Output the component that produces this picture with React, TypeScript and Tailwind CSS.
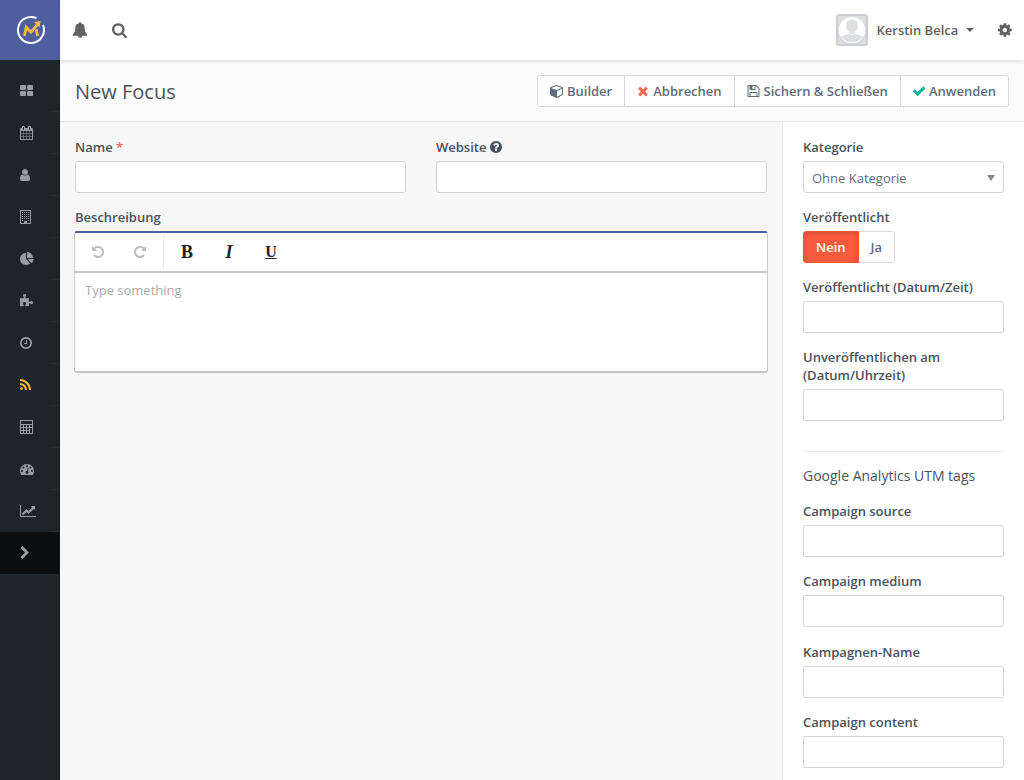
import clsx from "clsx";
import { useState, type ReactNode } from "react";

type Glyph = { box: string; d: string };

const ICONS = {
  grid: {
    box: "64 0 1664 1792",
    d: "M832 1024v384q0 52-38 90t-90 38h-512q-52 0-90-38t-38-90v-384q0-52 38-90t90-38h512q52 0 90 38t38 90zm0-768v384q0 52-38 90t-90 38h-512q-52 0-90-38t-38-90v-384q0-52 38-90t90-38h512q52 0 90 38t38 90zm896 768v384q0 52-38 90t-90 38h-512q-52 0-90-38t-38-90v-384q0-52 38-90t90-38h512q52 0 90 38t38 90zm0-768v384q0 52-38 90t-90 38h-512q-52 0-90-38t-38-90v-384q0-52 38-90t90-38h512q52 0 90 38t38 90z",
  },
  calendar: {
    box: "64 0 1664 1792",
    d: "M192 1664h288v-288h-288v288zm352 0h320v-288h-320v288zm-352-352h288v-320h-288v320zm352 0h320v-320h-320v320zm-352-384h288v-288h-288v288zm736 736h320v-288h-320v288zm-384-736h320v-288h-320v288zm768 736h288v-288h-288v288zm-384-352h320v-320h-320v320zm-352-864v-288q0-13-9.500-22.500t-22.500-9.500h-64q-13 0-22.500 9.500t-9.500 22.500v288q0 13 9.500 22.500t22.500 9.500h64q13 0 22.500-9.500t9.500-22.500zm736 864h288v-320h-288v320zm-384-384h320v-288h-320v288zm384 0h288v-288h-288v288zm32-480v-288q0-13-9.500-22.500t-22.500-9.500h-64q-13 0-22.500 9.500t-9.500 22.500v288q0 13 9.500 22.500t22.500 9.500h64q13 0 22.500-9.500t9.500-22.500zm384-64v1280q0 52-38 90t-90 38h-1408q-52 0-90-38t-38-90v-1280q0-52 38-90t90-38h128v-96q0-66 47-113t113-47h64q66 0 113 47t47 113v96h384v-96q0-66 47-113t113-47h64q66 0 113 47t47 113v96h128q52 0 90 38t38 90z",
  },
  user: {
    box: "256 0 1280 1792",
    d: "M1536 1399q0 109-62.500 187t-150.500 78h-854q-88 0-150.500-78t-62.500-187q0-85 8.500-160.500t31.500-152 58.500-131 94-89 134.500-34.500q131 128 313 128t313-128q76 0 134.500 34.500t94 89 58.500 131 31.500 152 8.500 160.500zm-256-887q0 159-112.500 271.500t-271.500 112.500-271.500-112.500-112.500-271.500 112.500-271.500 271.500-112.500 271.500 112.500 112.500 271.500z",
  },
  building: {
    box: "0 0 11 14",
    d: "M0 0h11v14h-11zM1 1v12h3v-2h3v2h3v-12zM2 2h1v1h-1zM4 2h1v1h-1zM6 2h1v1h-1zM8 2h1v1h-1zM2 4h1v1h-1zM4 4h1v1h-1zM6 4h1v1h-1zM8 4h1v1h-1zM2 6h1v1h-1zM4 6h1v1h-1zM6 6h1v1h-1zM8 6h1v1h-1zM2 8h1v1h-1zM4 8h1v1h-1zM6 8h1v1h-1zM8 8h1v1h-1zM2 10h1v1h-1zM8 10h1v1h-1z",
  },
  pie: {
    box: "0 0 1792 1792",
    d: "M768 890l546 546q-106 108-247.500 168t-298.500 60q-209 0-385.500-103t-279.500-279.500-103-385.500 103-385.500 279.500-279.500 385.500-103v762zm187 6h773q0 157-60 298.500t-168 247.500zm709-128h-768v-768q209 0 385.500 103t279.500 279.500 103 385.500z",
  },
  puzzle: {
    box: "64 0 1664 1792",
    d: "M1728 1098q0 81-44.500 135t-123.500 54q-41 0-77.500-17.500t-59-38-56.500-38-71-17.500q-110 0-110 124 0 39 16 115t15 115v5q-22 0-33 1-34 3-97.500 11.500t-115.500 13.500-98 5q-61 0-103-26.500t-42-83.500q0-37 17.500-71t38-56.500 38-59 17.500-77.500q0-79-54-123.500t-135-44.500q-84 0-143 45.500t-59 127.500q0 43 15 83t33.500 64.500 33.500 53 15 50.500q0 45-46 89-37 35-117 35-95 0-245-24-9-2-27.500-4t-27.500-4l-13-2q-1 0-3-1-2 0-2-1v-1024q2 1 17.500 3.500t34 5 21.500 3.500q150 24 245 24 80 0 117-35 46-44 46-89 0-22-15-50.500t-33.500-53-33.500-64.500-15-83q0-82 59-127.500t144-45.500q80 0 134 44.500t54 123.500q0 41-17.500 77.500t-38 59-38 56.500-17.500 71q0 57 42 83.500t103 26.500q64 0 180-15t163-17v2q-1 2-3.500 17.500t-5 34-3.500 21.500q-24 150-24 245 0 80 35 117 44 46 89 46 22 0 50.500-15t53-33.500 64.500-33.500 83-15q82 0 127.500 59t45.500 143z",
  },
  clock: {
    box: "128 0 1536 1792",
    d: "M1024 544v448q0 14-9 23t-23 9h-320q-14 0-23-9t-9-23v-64q0-14 9-23t23-9h224v-352q0-14 9-23t23-9h64q14 0 23 9t9 23zm416 352q0-148-73-273t-198-198-273-73-273 73-198 198-73 273 73 273 198 198 273 73 273-73 198-198 73-273zm224 0q0 209-103 385.500t-279.500 279.500-385.500 103-385.500-103-279.500-279.500-103-385.500 103-385.500 279.500-279.500 385.500-103 385.500 103 279.500 279.500 103 385.500z",
  },
  feed: {
    box: "192 0 1408 1792",
    d: "M576 1344q0 80-56 136t-136 56-136-56-56-136 56-136 136-56 136 56 56 136zm512 123q2 28-17 48-18 21-47 21h-135q-25 0-43-16.500t-20-41.500q-22-229-184.500-391.500t-391.500-184.500q-25-2-41.500-20t-16.500-43v-135q0-29 21-47 17-17 43-17h5q160 13 306 80.500t259 181.500q114 113 181.500 259t80.500 306zm512 2q2 27-18 47-18 20-46 20h-143q-26 0-44.500-17.500t-19.500-42.500q-12-215-101-408.500t-231.500-336-336-231.500-408.500-102q-25-1-42.500-19.500t-17.500-43.500v-143q0-28 20-46 18-18 44-18h3q262 13 501.500 120t425.500 294q187 186 294 425.500t120 501.500z",
  },
  calculator: {
    box: "0 0 13 14",
    d: "M0 0h13v14h-13zM1 1v3h11v-3zM1 5v2h2v-2zM4 5v2h2v-2zM7 5v2h2v-2zM10 5v2h2v-2zM1 8v2h2v-2zM4 8v2h2v-2zM7 8v2h2v-2zM1 11v2h2v-2zM4 11v2h2v-2zM7 11v2h2v-2zM10 8v5h2v-5z",
  },
  gauge: {
    box: "0 0 1792 1792",
    d: "M384 1152q0-53-37.500-90.500t-90.500-37.500-90.500 37.500-37.500 90.500 37.500 90.500 90.500 37.500 90.500-37.500 37.500-90.500zm192-448q0-53-37.500-90.500t-90.500-37.500-90.500 37.500-37.500 90.500 37.500 90.500 90.500 37.500 90.500-37.500 37.500-90.500zm428 481l101-382q6-26-7.500-48.500t-38.500-29.500-48 6.500-30 39.500l-101 382q-60 5-107 43.500t-63 98.500q-20 77 20 146t117 89 146-20 89-117q16-60-6-117t-72-91zm660-33q0-53-37.500-90.500t-90.500-37.500-90.500 37.500-37.500 90.500 37.500 90.500 90.500 37.500 90.500-37.500 37.500-90.500zm-640-640q0-53-37.500-90.500t-90.500-37.500-90.500 37.500-37.500 90.500 37.500 90.500 90.500 37.500 90.500-37.500 37.500-90.500zm448 192q0-53-37.500-90.500t-90.500-37.500-90.500 37.500-37.500 90.500 37.500 90.500 90.500 37.500 90.500-37.500 37.500-90.500zm320 448q0 261-141 483-19 29-54 29h-1402q-35 0-54-29-141-221-141-483 0-182 71-348t191-286 286-191 348-71 348 71 286 191 191 286 71 348z",
  },
  chart: {
    box: "0 0 2048 1792",
    d: "M2048 1536v128h-2048v-1536h128v1408h1920zm-128-1248v435q0 21-19.500 29.500t-35.500-7.500l-121-121-633 633q-10 10-23 10t-23-10l-233-233-416 416-192-192 585-585q10-10 23-10t23 10l233 233 464-464-121-121q-16-16-7.500-35.500t29.500-19.500h435q14 0 23 9t9 23z",
  },
  chevron: {
    box: "256 0 1280 1792",
    d: "M1363 877l-742 742q-19 19-45 19t-45-19l-166-166q-19-19-19-45t19-45l531-531-531-531q-19-19-19-45t19-45l166-166q19-19 45-19t45 19l742 742q19 19 19 45t-19 45z",
  },
  bell: {
    box: "0 0 1792 1792",
    d: "M912 1696q0-16-16-16-59 0-101.500-42.500t-42.500-101.500q0-16-16-16t-16 16q0 73 51.500 124.500t124.500 51.500q16 0 16-16zm816-288q0 52-38 90t-90 38h-448q0 106-75 181t-181 75-181-75-75-181h-448q-52 0-90-38t-38-90q50-42 91-88t85-119.500 74.500-158.500 50-206 19.500-260q0-152 117-282.500t307-158.500q-8-19-8-39 0-40 28-68t68-28 68 28 28 68q0 20-8 39 190 28 307 158.500t117 282.500q0 139 19.500 260t50 206 74.500 158.500 85 119.500 91 88z",
  },
  search: {
    box: "64 0 1664 1792",
    d: "M1216 832q0-185-131.500-316.500t-316.500-131.500-316.500 131.500-131.500 316.500 131.500 316.500 316.500 131.500 316.500-131.500 131.500-316.500zm512 832q0 52-38 90t-90 38q-54 0-90-38l-343-342q-179 124-399 124-143 0-273.500-55.500t-225-150-150-225-55.500-273.500 55.500-273.500 150-225 225-150 273.500-55.500 273.500 55.500 225 150 150 225 55.500 273.500q0 220-124 399l343 343q37 37 37 90z",
  },
  cog: {
    box: "128 0 1536 1792",
    d: "M1152 896q0-106-75-181t-181-75-181 75-75 181 75 181 181 75 181-75 75-181zm512-109v222q0 12-8 23t-20 13l-185 28q-19 54-39 91 35 50 107 138 10 12 10 25t-9 23q-27 37-99 108t-94 71q-12 0-26-9l-138-108q-44 23-91 38-16 136-29 186-7 28-36 28h-222q-14 0-24.500-8.500t-11.500-21.500l-28-184q-49-16-90-37l-141 107q-10 9-25 9-14 0-25-11-126-114-165-168-7-10-7-23 0-12 8-23 15-21 51-66.500t54-70.500q-27-50-41-99l-183-27q-13-2-21-12.500t-8-23.500v-222q0-12 8-23t19-13l186-28q14-46 39-92-40-57-107-138-10-12-10-24 0-10 9-23 26-36 98.500-107.500t94.500-71.500q13 0 26 10l138 107q44-23 91-38 16-136 29-186 7-28 36-28h222q14 0 24.500 8.500t11.500 21.500l28 184q49 16 90 37l142-107q9-9 24-9 13 0 25 10 129 119 165 170 7 8 7 22 0 12-8 23-15 21-51 66.500t-54 70.500q26 50 41 98l183 28q13 2 21 12.500t8 23.500z",
  },
  cube: {
    box: "0 0 1664 1792",
    d: "M896 1629l640-349v-636l-640 233v752zm-64-865l698-254-698-254-698 254zm832-252v768q0 35-18 65t-49 47l-704 384q-28 16-61 16t-61-16l-704-384q-31-17-49-47t-18-65v-768q0-40 23-73t61-47l704-256q22-8 44-8t44 8l704 256q38 14 61 47t23 73z",
  },
  times: {
    box: "128 0 1536 1792",
    d: "M1490 1322q0 40-28 68l-136 136q-28 28-68 28t-68-28l-294-294-294 294q-28 28-68 28t-68-28l-136-136q-28-28-28-68t28-68l294-294-294-294q-28-28-28-68t28-68l136-136q28-28 68-28t68 28l294 294 294-294q28-28 68-28t68 28l136 136q28 28 28 68t-28 68l-294 294 294 294q28 28 28 68z",
  },
  floppy: {
    box: "64 0 1664 1792",
    d: "M512 1536h768v-384h-768v384zm896 0h128v-896q0-14-10-38.500t-20-34.500l-281-281q-10-10-34-20t-39-10v416q0 40-28 68t-68 28h-576q-40 0-68-28t-28-68v-416h-128v1280h128v-416q0-40 28-68t68-28h832q40 0 68 28t28 68v416zm-384-928v-320q0-13-9.500-22.500t-22.500-9.500h-192q-13 0-22.500 9.500t-9.500 22.500v320q0 13 9.500 22.500t22.500 9.500h192q13 0 22.500-9.500t9.500-22.500zm640 32v928q0 40-28 68t-68 28h-1344q-40 0-68-28t-28-68v-1344q0-40 28-68t68-28h928q40 0 88 20t76 48l280 280q28 28 48 76t20 88z",
  },
  check: {
    box: "120 0 1552 1792",
    d: "M1671 566q0 40-28 68l-724 724-136 136q-28 28-68 28t-68-28l-136-136-362-362q-28-28-28-68t28-68l136-136q28-28 68-28t68 28l294 295 656-657q28-28 68-28t68 28l136 136q28 28 28 68z",
  },
  undo: {
    box: "128 0 1536 1792",
    d: "M1664 896q0 156-61 298t-164 245-245 164-298 61q-172 0-327-72.500t-264-204.500q-7-10-6.500-22.500t8.500-20.500l137-138q10-9 25-9 16 2 23 12 73 95 179 147t225 52q104 0 198.500-40.500t163.500-109.500 109.500-163.500 40.500-198.500-40.500-198.500-109.500-163.500-163.500-109.500-198.500-40.500q-98 0-188 35.500t-160 101.500l137 138q31 30 14 69-17 40-59 40h-448q-26 0-45-19t-19-45v-448q0-42 40-59 39-17 69 14l130 129q107-101 244.500-156.500t284.500-55.500q156 0 298 61t245 164 164 245 61 298z",
  },
  help: {
    box: "128 0 1536 1792",
    d: "M1024 1376v-192q0-14-9-23t-23-9h-192q-14 0-23 9t-9 23v192q0 14 9 23t23 9h192q14 0 23-9t9-23zm256-672q0-88-55.500-163t-138.500-116-170-41q-243 0-371 213-15 24 8 42l132 100q7 6 19 6 16 0 25-12 53-68 86-92 34-24 86-24 48 0 85.500 26t37.500 59q0 38-20 61t-68 45q-63 28-115.500 86.500t-52.500 125.500v36q0 14 9 23t23 9h192q14 0 23-9t9-23q0-19 21.500-49.500t54.500-49.500q32-18 49-28.500t46-35 44.500-48 28-60.500 12.500-81zm384 192q0 209-103 385.500t-279.500 279.500-385.500 103-385.500-103-279.500-279.500-103-385.500 103-385.500 279.500-279.500 385.500-103 385.500 103 279.500 279.500 103 385.500z",
  },
} satisfies Record<string, Glyph>;

type IconName = keyof typeof ICONS;

function Icon({ name, className = "h-3.5" }: { name: IconName; className?: string }) {
  return (
    <svg
      viewBox={ICONS[name].box}
      className={clsx("w-auto shrink-0", className)}
      fill="currentColor"
      fillRule="evenodd"
      aria-hidden="true"
    >
      <path d={ICONS[name].d} />
    </svg>
  );
}

const NAV: { label: string; icon: IconName; active?: boolean }[] = [
  { label: "Dashboard", icon: "grid" },
  { label: "Kalender", icon: "calendar" },
  { label: "Kontakte", icon: "user" },
  { label: "Unternehmen", icon: "building" },
  { label: "Segmente", icon: "pie" },
  { label: "Komponenten", icon: "puzzle" },
  { label: "Kampagnen", icon: "clock" },
  { label: "Kanäle", icon: "feed", active: true },
  { label: "Punkte", icon: "calculator" },
  { label: "Stufen", icon: "gauge" },
  { label: "Berichte", icon: "chart" },
];

const UTM_FIELDS = [
  { id: "utm-source", label: "Campaign source" },
  { id: "utm-medium", label: "Campaign medium" },
  { id: "utm-name", label: "Kampagnen-Name" },
  { id: "utm-content", label: "Campaign content" },
];

function Logo() {
  return (
    <svg viewBox="0 0 30 30" className="size-[30px]" fill="none" aria-hidden="true">
      <path d="M20.500 3.200A13 13 0 1 0 27 10" stroke="#fff" strokeWidth="2" />
      <path d="M8.400 21L10.200 12.200L15 17.200L21.500 9.500" stroke="#fdb933" strokeWidth="2.800" />
      <path d="M18.200 7L24.600 6L23.400 12.400Z" fill="#fdb933" />
      <path d="M20.200 14.400L21.600 21" stroke="#fdb933" strokeWidth="2.800" />
    </svg>
  );
}

function Avatar() {
  return (
    <svg viewBox="0 0 32 32" className="size-8" aria-hidden="true">
      <rect x="1" y="1" width="30" height="30" rx="2" fill="#dedfe3" stroke="#cdced2" strokeWidth="2" />
      <circle cx="16" cy="16" r="13" fill="#fff" />
      <path
        d="M16 5.500c3.600 0 6 2.500 6 6 0 3-1.500 5.500-3.200 6.500v2c3 .4 6 1.200 7.700 2.600a12.500 12.500 0 0 1-21 0c1.700-1.400 4.700-2.200 7.700-2.600v-2c-1.700-1-3.200-3.500-3.200-6.500 0-3.500 2.400-6 6-6z"
        fill="#dedfe3"
      />
      <path d="M13 19.500q3 3 6 0" stroke="#fff" fill="none" />
    </svg>
  );
}

function Sidebar() {
  return (
    <aside className="flex w-[60px] shrink-0 flex-col border-r border-[#171c20] bg-[#1d242a]">
      <a
        href="#"
        aria-label="Startseite"
        className="-mr-px flex h-[60px] items-center justify-center bg-[#4e5e9e] pl-0.5"
      >
        <Logo />
      </a>
      <nav className="flex flex-col pt-2.5 text-[#989da1]">
        {NAV.map(({ label, icon, active }) => (
          <a
            key={label}
            href="#"
            aria-label={label}
            className={clsx(
              "relative flex h-[42px] items-center pl-5",
              "after:absolute after:right-0 after:bottom-0 after:h-px after:w-[9px] after:bg-[#252c32]",
              active && "text-[#fdb933]",
            )}
          >
            <Icon name={icon} />
          </a>
        ))}
        <button type="button" aria-label="Menü ausklappen" className="flex h-[42px] items-center bg-[#0b0f11] pl-5">
          <Icon name="chevron" />
        </button>
      </nav>
    </aside>
  );
}

function TopBar() {
  return (
    <header className="relative flex h-[60px] items-center bg-white text-[#616161] shadow-[0_1px_4px_rgba(0,0,0,0.15)]">
      <button type="button" aria-label="Benachrichtigungen" className="ml-3">
        <Icon name="bell" className="h-4" />
      </button>
      <button type="button" aria-label="Suche" className="ml-6">
        <Icon name="search" className="h-4" />
      </button>
      <button type="button" className="ml-auto flex items-center gap-2 font-semibold">
        <Avatar />
        Kerstin Belca
        <svg viewBox="0 0 8 4" className="h-1 w-2" fill="currentColor" aria-hidden="true">
          <path d="M0 0h8l-4 4z" />
        </svg>
      </button>
      <button type="button" aria-label="Einstellungen" className="mr-3 ml-6">
        <Icon name="cog" className="h-4" />
      </button>
    </header>
  );
}

function ActionButton({ icon, tone, children }: { icon: IconName; tone?: string; children: ReactNode }) {
  return (
    <button
      type="button"
      className="-ml-px flex h-8 items-center gap-1 border border-[#d9d9d9] bg-white px-3 font-semibold text-[#5d6c7c] first:rounded-l-[3px] last:rounded-r-[3px]"
    >
      <span className={tone}>
        <Icon name={icon} />
      </span>
      {children}
    </button>
  );
}

function Field({ id, label, children }: { id: string; label: ReactNode; children?: ReactNode }) {
  return (
    <div className="flex min-w-0 flex-1 flex-col gap-[5px]">
      <label htmlFor={id} className="font-semibold">
        {label}
      </label>
      {children ?? (
        <input
          id={id}
          type="text"
          className="h-8 w-full rounded-[3px] border border-[#d3d3d3] bg-white px-2 outline-none focus:border-[#4e5e9e]"
        />
      )}
    </div>
  );
}

function Editor() {
  const [text, setText] = useState("");

  return (
    <div className="-mx-px flex flex-col rounded-[3px] border-x border-t-2 border-b-2 border-x-[#cacaca] border-t-[#4e5e9e] border-b-[#c3c3c3] bg-white">
      <div className="flex h-10 items-center border-b-2 border-[#c8c8c8] px-0.5 text-[#222]">
        <button type="button" disabled aria-label="Rückgängig" className="flex w-[42px] justify-center text-[#bdbdbd]">
          <Icon name="undo" />
        </button>
        <button type="button" disabled aria-label="Wiederholen" className="flex w-[42px] justify-center text-[#bdbdbd]">
          <Icon name="undo" className="h-3.5 -scale-x-100" />
        </button>
        <span className="mx-0.5 h-[34px] w-px bg-[#ebebeb]" />
        <button type="button" aria-label="Fett" className="w-[42px] font-['Liberation_Serif',serif] text-[18px] font-bold">
          B
        </button>
        <button
          type="button"
          aria-label="Kursiv"
          className="w-[42px] font-['Liberation_Serif',serif] text-[18px] font-bold italic"
        >
          I
        </button>
        <button
          type="button"
          aria-label="Unterstrichen"
          className="w-[42px] font-['Liberation_Serif',serif] text-[16px] font-bold underline"
        >
          U
        </button>
      </div>
      <textarea
        id="description"
        value={text}
        onChange={(e) => setText(e.target.value)}
        placeholder="Type something"
        className="h-[98px] resize-none px-2.5 pt-2 outline-none placeholder:text-[#aaa]"
      />
    </div>
  );
}

function PublishToggle() {
  const [published, setPublished] = useState(false);

  return (
    <fieldset>
      <legend className="mb-[5px] font-semibold">Veröffentlicht</legend>
      <div className="flex font-semibold">
        <label
          className={clsx(
            "flex h-8 items-center rounded-l-[3px] border px-3",
            published
              ? "border-[#d9d9d9] bg-white text-[#5d6c7c]"
              : "border-[#f05533] bg-[#fa5b3c] text-white shadow-[inset_0_2px_4px_rgba(0,0,0,0.15)]",
          )}
        >
          <input
            type="radio"
            name="published"
            className="sr-only"
            checked={!published}
            onChange={() => setPublished(false)}
          />
          Nein
        </label>
        <label
          className={clsx(
            "flex h-8 items-center rounded-r-[3px] border border-l-0 px-3",
            published ? "border-[#00a388] bg-[#00b49c] text-white" : "border-[#d9d9d9] bg-white text-[#5d6c7c]",
          )}
        >
          <input
            type="radio"
            name="published"
            className="sr-only"
            checked={published}
            onChange={() => setPublished(true)}
          />
          Ja
        </label>
      </div>
    </fieldset>
  );
}

function SettingsPanel() {
  return (
    <aside className="flex w-[242px] shrink-0 flex-col gap-[15px] border-l border-[#ebebeb] bg-white px-5 pt-4 pb-3">
      <div className="flex">
        <Field id="category" label="Kategorie">
          <div className="relative">
            <select
              id="category"
              className="h-8 w-full appearance-none rounded-[3px] border border-[#d3d3d3] bg-white px-2 pt-0.5 text-[#5d6c7c] outline-none"
            >
              <option>Ohne Kategorie</option>
            </select>
            <svg
              viewBox="0 0 8 6"
              className="pointer-events-none absolute top-[14px] right-[9px] h-1.5 w-2"
              fill="#888"
              aria-hidden="true"
            >
              <path d="M0 0h8l-4 6z" />
            </svg>
          </div>
        </Field>
      </div>
      <PublishToggle />
      <Field id="publish-up" label="Veröffentlicht (Datum/Zeit)" />
      <Field id="publish-down" label="Unveröffentlichen am (Datum/Uhrzeit)" />
      <hr className="mt-[15px] border-[#ebebeb]" />
      <h2 className="pb-0.5 text-[14px] leading-[18px]">Google Analytics UTM tags</h2>
      {UTM_FIELDS.map(({ id, label }) => (
        <Field key={id} id={id} label={label} />
      ))}
    </aside>
  );
}

export default function App() {
  return (
    <div className="flex min-h-screen bg-[#f7f7f7] font-['Open_Sans',sans-serif] text-[13px] leading-[18px] text-[#47535f]">
      <Sidebar />
      <div className="flex min-w-0 flex-1 flex-col">
        <TopBar />
        <div className="flex items-center justify-between border-b border-[#e6e6e6] bg-[#fbfbfb] px-[15px] pt-[15px] pb-3.5">
          <h1 className="pt-0.5 text-[20px] leading-[30px]">New Focus</h1>
          <div className="flex">
            <ActionButton icon="cube">Builder</ActionButton>
            <ActionButton icon="times" tone="text-[#fa6a4e]">
              Abbrechen
            </ActionButton>
            <ActionButton icon="floppy">Sichern &amp; Schließen</ActionButton>
            <ActionButton icon="check" tone="text-[#00b49c]">
              Anwenden
            </ActionButton>
          </div>
        </div>
        <form className="flex flex-1">
          <div className="flex min-w-0 flex-1 flex-col gap-[15px] px-[15px] pt-4">
            <div className="flex gap-[30px]">
              <Field
                id="name"
                label={
                  <>
                    Name <span className="text-[#fa6a4e]">*</span>
                  </>
                }
              />
              <Field
                id="website"
                label={
                  <span className="flex items-center gap-1">
                    Website <Icon name="help" />
                  </span>
                }
              />
            </div>
            <div className="flex">
              <Field id="description" label="Beschreibung">
                <Editor />
              </Field>
            </div>
          </div>
          <SettingsPanel />
        </form>
      </div>
    </div>
  );
}
